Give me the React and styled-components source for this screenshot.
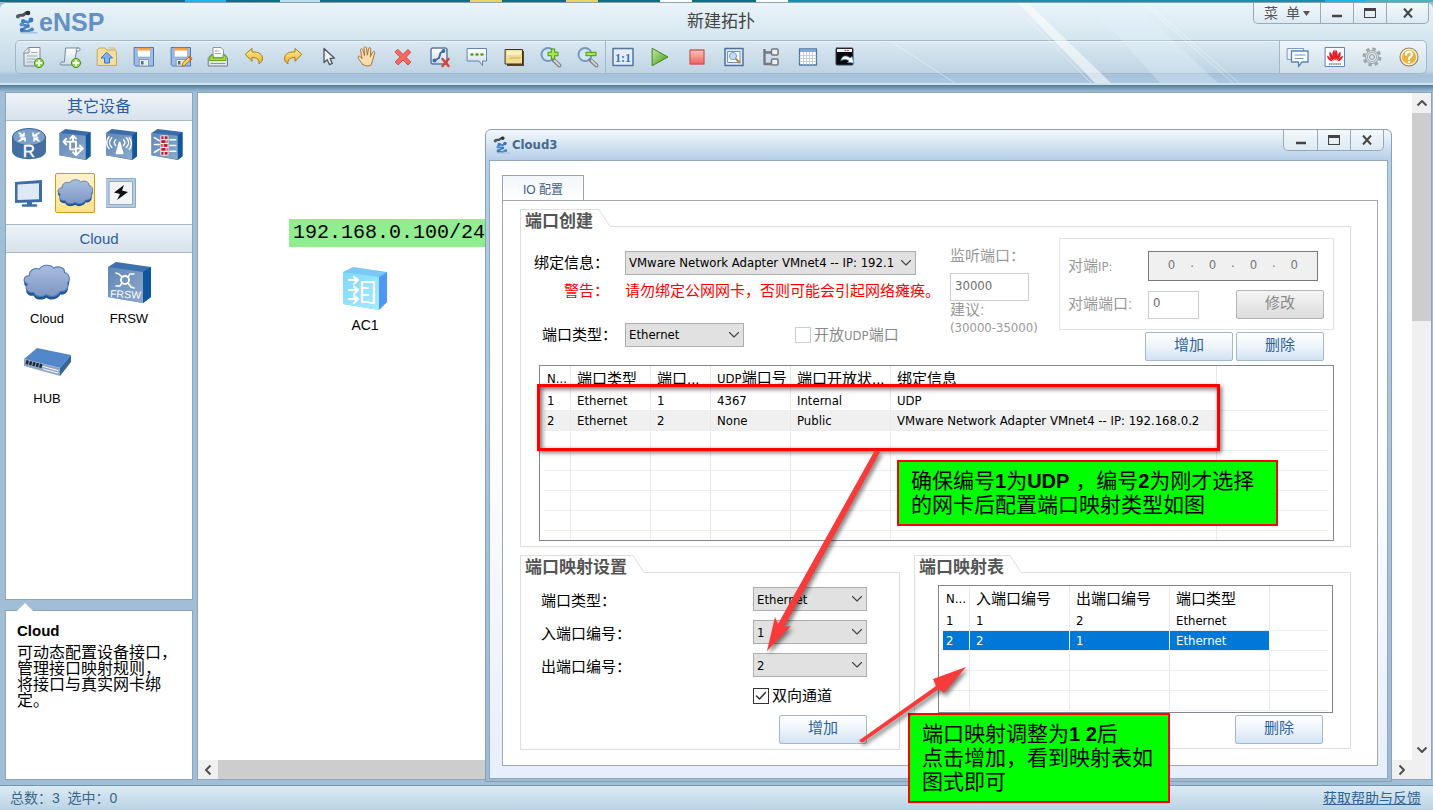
import React, { useState } from 'react';
import styled, { css, createGlobalStyle } from 'styled-components';

const cjk = `'Liberation Sans', 'Noto Sans CJK SC', sans-serif`;
const ui = `'DejaVu Sans Condensed', 'Noto Sans', 'Noto Sans CJK SC', sans-serif`;

const GlobalStyle = createGlobalStyle`
  * {
    box-sizing: border-box;
  }
  body {
    margin: 0;
    font-family: ${cjk};
    font-size: 15px;
    color: #000;
  }
  button,
  input,
  select {
    font: inherit;
    margin: 0;
  }
  svg {
    display: block;
  }
`;

/* ---------- frame ---------- */

const Frame = styled.div`
  min-height: 100vh;
  display: flex;
  flex-direction: column;
  background-color: #a1bed6;
  overflow: hidden;
`;
const Desktop = styled.div`
  height: 2px;
  background: linear-gradient(
    to right,
    #0b6f86 0 185px,
    #1ab6f0 185px 226px,
    #0b6f86 226px 280px,
    #b8e0f0 280px 320px,
    #0b6f86 320px 470px,
    #f0d060 470px 502px,
    #0b6f86 502px 566px,
    #f0d060 566px 598px,
    #0b6f86 598px 660px,
    #ffffff 660px 692px,
    #0b6f86 692px 756px,
    #ffffff 756px 788px,
    #1791a5 788px 1325px,
    #1ab6f0 1325px 1366px,
    #43b5bd 1366px
  );
`;
const Header = styled.header`
  position: relative;
  padding: 0 6px 9px 15px;
  border-top: 1px solid #8ba3b0;
  border-bottom: 2px solid #cfe3ef;
  border-radius: 6px 6px 0 0;
  background: linear-gradient(#eaf4f9, #d5e6ef 45%, #c2d7e6 85%, #a6c2db 90%, #adc8de);
`;
const Rays = styled.svg`
  position: absolute;
  right: 0;
  top: 0;
  width: 760px;
  height: 100%;
  pointer-events: none;
`;
const TitleRow = styled.div`
  position: relative;
  display: grid;
  grid-template-columns: 1fr auto 1fr;
  height: 37px;
`;
const Brand = styled.div`
  display: flex;
  align-items: center;
  font-size: 25px;
  line-height: 36px;
  font-weight: 700;
  color: #6590c5;
`;
const DocTitle = styled.div`
  font-size: 17px;
  line-height: 37px;
  color: #444;
`;
const Controls = styled.div`
  display: flex;
  justify-self: end;
  align-self: start;
  margin-right: ${(props) => (props.small ? '4px' : '-2px')};
  border: 1px solid #98a9b8;
  border-top: 0;
  border-radius: 0 0 5px 5px;
  background: linear-gradient(#f4f9fc, #dce9f2);
`;
const Control = styled.button`
  display: flex;
  justify-content: center;
  align-items: center;
  gap: 3px;
  width: ${(props) => props.w || 33}px;
  height: 20px;
  padding: 0;
  border: 0;
  background: transparent;
  font-size: 14px;
  line-height: 20px;
  white-space: pre;
  color: #555;
  & + & {
    border-left: 1px solid #98a9b8;
  }
`;

const Toolbar = styled.div`
  position: relative;
  display: flex;
  height: 34px;
  border: 1px solid #a0b8c9;
  border-radius: 5px;
  background: linear-gradient(#dbe9f2, #bed3e3);
  box-shadow: inset 0 1px 0 #eef6fa;
`;
const ToolGroup = styled.div`
  display: flex;
  align-items: center;
  gap: 4px;
  ${(props) =>
    props.divided &&
    css`
      margin-left: 1px;
      border-left: 1px solid #a0b8c9;
    `}
  ${(props) =>
    props.end &&
    css`
      margin-left: auto;
      padding: 0 1px;
      border-left: 1px solid #a0b8c9;
      border-radius: 0 5px 5px 0;
      background: linear-gradient(#eff6fa, #cfdfe9);
    `}
`;
const Tool = styled.button`
  display: flex;
  justify-content: center;
  align-items: center;
  width: 33px;
  height: 32px;
  padding: 0;
  border: 0;
  background: transparent;
`;

const Body = styled.div`
  flex: 1;
  display: flex;
  gap: 4px;
  padding: 7px 1px 5px 5px;
  background: linear-gradient(#4f7c98, #a1bed6 7px, #a1bed6);
`;

/* ---------- sidebar ---------- */

const Sidebar = styled.aside`
  display: flex;
  flex-direction: column;
  gap: 10px;
  width: 188px;
`;
const Palette = styled.section`
  height: 508px;
  border: 1px solid #8ba5bf;
  background-color: #fff;
`;
const PaletteTitle = styled.h2`
  margin: 0;
  height: 28px;
  border-bottom: 1px solid #a4b8ca;
  background: linear-gradient(#edf2f7, #d9e3ec);
  font-size: ${(props) => (props.latin ? '15px' : '16px')};
  line-height: 27px;
  font-weight: 400;
  text-align: center;
  color: #2b5ea3;
`;
const Categories = styled.div`
  display: grid;
  grid-template-columns: repeat(4, 46px);
  grid-auto-rows: 49px;
  height: 104px;
  border-bottom: 1px solid #a4b8ca;
`;
const Category = styled.button`
  display: flex;
  justify-content: center;
  align-items: center;
  width: 40px;
  height: 40px;
  margin: 3px;
  padding: 0;
  border: 1px solid transparent;
  border-radius: 2px;
  background: transparent;
  ${(props) =>
    props.selected &&
    css`
      border-color: #d19a1c;
      background: linear-gradient(#fdf1cf, #fee389);
    `}
`;
const Devices = styled.div`
  display: grid;
  grid-template-columns: repeat(2, 82px);
  grid-auto-rows: 80px;
`;
const Device = styled.div`
  display: flex;
  flex-direction: column;
  align-items: center;
  justify-content: space-between;
  padding: 6px 0 6px;
  font-size: 13px;
  line-height: 16px;
`;
const IconBox = styled.div`
  display: flex;
  align-items: center;
  height: 46px;
`;
const Info = styled.section`
  position: relative;
  flex: 1;
  padding: 11px;
  border: 1px solid #8ba5bf;
  background-color: #fff;
  font-size: 16px;
  line-height: 16px;
  white-space: pre-line;
  &::before {
    content: '';
    position: absolute;
    left: 11px;
    top: -8px;
    border: 8px solid transparent;
    border-top: 0;
    border-bottom-color: #fff;
  }
`;
const InfoTitle = styled.h3`
  margin: 0 0 5px;
  font-size: 15px;
  line-height: 18px;
`;

/* ---------- canvas ---------- */

const Workspace = styled.main`
  position: relative;
  flex: 1;
  display: grid;
  grid-template-columns: 1fr 19px;
  grid-template-rows: 1fr 19px;
  border: 1px solid #8ba5bf;
  background-color: #fff;
`;
const Sheet = styled.div`
  position: relative;
`;
const AddressTag = styled.div`
  position: absolute;
  left: 91px;
  top: 126px;
  padding: 0 4px;
  background-color: #90ee90;
  font-family: 'Liberation Mono', monospace;
  font-size: 20px;
  line-height: 28px;
`;
const Node = styled.div`
  position: absolute;
  left: 145px;
  top: 174px;
  display: flex;
  flex-direction: column;
  align-items: center;
  gap: 5px;
  font-size: 14px;
  line-height: 20px;
`;
const Scroll = styled.div`
  display: flex;
  flex-direction: ${(props) => (props.vertical ? 'column' : 'row')};
  background-color: #f0f0f0;
  svg {
    flex: none;
    width: 20px;
    height: 20px;
  }
`;
const Thumb = styled.div`
  flex: ${(props) => (props.vertical ? '0 0 208px' : '0 0 1000px')};
  background-color: #cdcdcd;
`;
const Space = styled.div`
  flex: 1;
`;

/* ---------- dialog ---------- */

const Dialog = styled.div`
  position: absolute;
  z-index: 1;
  left: 287px;
  right: 39px;
  top: 36px;
  padding: 0 3px 2px;
  border: 1px solid #8b9fb3;
  border-radius: 6px 6px 0 0;
  background: linear-gradient(#f3f8fc, #b3cee7 31px, #9bbad6);
`;
const DialogTitle = styled.div`
  display: flex;
  justify-content: space-between;
  height: 30px;
`;
const DialogName = styled.div`
  display: flex;
  align-items: center;
  gap: 1px;
  padding-left: 4px;
  font-family: ${ui};
  font-size: 13px;
  font-weight: 700;
  line-height: 26px;
  color: #44698f;
`;
const DialogBody = styled.div`
  padding: 14px 9px 12px 12px;
  border: 1px solid #93a8bc;
  background: linear-gradient(#fff 40%, #e7effc);
`;
const Tab = styled.button`
  display: block;
  width: 82px;
  height: 25px;
  padding: 0;
  border: 1px solid #9aa5af;
  border-bottom: 0;
  background: linear-gradient(#f2f6fb, #fff);
  font-size: 12px;
  color: #3f6083;
`;
const Panel = styled.div`
  display: flex;
  flex-direction: column;
  gap: 8px;
  padding: 8px 26px 15px 17px;
  border: 1px solid #a3a8ad;
  background-color: #fff;
`;
const Group = styled.section`
  min-width: 0;
`;
const GroupHead = styled.div`
  display: flex;
  height: 18px;
`;
const GroupName = styled.h3`
  margin: 0;
  padding: 0 5px 0 4px;
  border: 1px solid #dedede;
  border-width: 1px 0 0 1px;
  font-size: 17px;
  line-height: 24px;
  font-weight: 700;
  white-space: nowrap;
  color: #555;
`;
const GroupRule = styled.div`
  flex: 1;
  border-bottom: 1px solid #dedede;
`;
const GroupBody = styled.div`
  padding: ${(props) => props.pad};
  border: 1px solid #dedede;
  border-top: 0;
`;
const Split = styled.div`
  display: grid;
  grid-template-columns: 380fr 437fr;
  gap: 14px;
`;

const CreateForm = styled.div`
  display: flex;
  height: 127px;
`;
const BindColumn = styled.div`
  display: flex;
  flex-direction: column;
  width: 416px;
  padding-top: 13px;
`;
const FormRow = styled.div`
  display: flex;
  align-items: center;
  height: ${(props) => props.h || 24}px;
  margin-top: ${(props) => props.top || 0}px;
  color: ${(props) => (props.warn ? '#f00' : '#000')};
  line-height: 20px;
  white-space: nowrap;
`;
const Caption = styled.label`
  flex: none;
  width: 91px;
  padding-left: ${(props) => props.indent || 0}px;
`;
const Picker = styled.div`
  position: relative;
  width: ${(props) => (props.w ? `${props.w}px` : '100%')};
  height: 24px;
  select {
    width: 100%;
    height: 24px;
    padding: 0 20px 0 3px;
    border: 1px solid #adadad;
    border-radius: 0;
    background-color: #e1e1e1;
    appearance: none;
    font-family: ${ui};
    font-size: 13px;
    color: #000;
  }
  svg {
    position: absolute;
    right: 4px;
    top: 8px;
    pointer-events: none;
  }
`;
const Check = styled.label`
  display: inline-flex;
  align-items: center;
  gap: 3px;
  margin-left: ${(props) => props.left || 0}px;
  line-height: 20px;
  color: ${(props) => (props.off ? '#8a8a8a' : '#000')};
`;
const CheckBox = styled.span`
  display: inline-grid;
  input {
    grid-area: 1 / 1;
    width: 16px;
    height: 16px;
    border: 1px solid #333;
    background-color: #fff;
    appearance: none;
  }
  input:disabled {
    border-color: #ccc;
  }
  svg {
    grid-area: 1 / 1;
    pointer-events: none;
  }
`;
const Latin = styled.span`
  font-family: ${ui};
  font-size: 13px;
`;
const ListenColumn = styled.div`
  display: flex;
  flex-direction: column;
  align-items: flex-start;
  padding-top: 9px;
  line-height: 18px;
  color: #999;
  input {
    margin-top: 8px;
  }
`;
const TextBox = styled.input`
  width: ${(props) => props.w}px;
  height: 28px;
  padding: 0 4px 4px;
  border: 1px solid #ccc;
  background-color: #fff;
  font-family: ${ui};
  font-size: 13px;
  color: #6d6d6d;
`;
const PeerColumn = styled.div`
  width: 275px;
  margin-left: auto;
`;
const PeerBox = styled.div`
  height: 92px;
  padding: 12px 9px 0 8px;
  border: 1px solid #e2e2e2;
`;
const PeerRow = styled.div`
  display: flex;
  align-items: center;
  margin-bottom: 9px;
  color: #999;
  label {
    width: 80px;
    padding-bottom: 4px;
  }
`;
const IpBox = styled.div`
  display: flex;
  justify-content: space-evenly;
  width: 170px;
  height: 30px;
  padding: 0 4px;
  border: 1px solid #7a7a7a;
  background-color: #f0f0f0;
  font-family: ${ui};
  font-size: 13px;
  line-height: 22px;
  color: #777;
  input {
    width: 24px;
    height: 24px;
    padding: 0;
    border: 0;
    background: transparent;
    text-align: center;
    color: #777;
  }
`;
const Push = styled.button`
  width: 88px;
  height: 29px;
  padding: 0 0 3px;
  border: 1px solid #a3b8cc;
  border-radius: 2px;
  background: linear-gradient(#fff, #eef4fb 50%, #d2e2f2);
  font-size: 15px;
  line-height: 20px;
  color: #2b62a0;
  &:disabled {
    border-color: #b4b4b4;
    background: linear-gradient(#f5f5f5, #dcdcdc);
    color: #8a8a8a;
  }
`;
const Pushes = styled.div`
  display: flex;
  justify-content: flex-end;
  gap: 3px;
  margin: ${(props) => props.top || 2}px ${(props) => props.right || 0}px 0 0;
`;

const TableFrame = styled.div`
  height: ${(props) => props.h}px;
  margin-left: ${(props) => props.left || 0}px;
  padding: 0 4px;
  border: 1px solid #828790;
  overflow: hidden;
`;
const Table = styled.table`
  width: 100%;
  table-layout: fixed;
  border-collapse: separate;
  border-spacing: 0;
  th,
  td {
    height: 20px;
    padding: 0 0 0 6px;
    border-right: 1px solid #e9e9e9;
    border-bottom: 1px solid #eee;
    text-align: left;
    font-family: ${ui};
    font-size: 13px;
    line-height: 18px;
    font-weight: 400;
    white-space: nowrap;
    overflow: hidden;
  }
  th {
    height: 25px;
    border-bottom: 0;
    font-family: ${cjk};
    font-size: 15px;
    line-height: 22px;
  }
  th:first-child,
  td:first-child {
    padding-left: 3px;
  }
  th:last-child,
  td:last-child {
    border-right: 0;
  }
`;
const Row = styled.tr`
  ${(props) =>
    props.tone === 'stripe'
      ? css`
          td:not(:last-child) {
            background-color: #f0f0f0;
          }
        `
      : props.tone === 'selected'
      ? css`
          td:not(:last-child) {
            background-color: #0078d7;
            border-right-color: #fff;
            color: #fff;
          }
        `
      : ''}
`;

const MapForm = styled.div`
  display: grid;
  grid-template-columns: 1fr 114px;
  row-gap: 9px;
  align-items: center;
`;
const Second = styled.div`
  grid-column: 2;
`;

/* ---------- notes drawn over the dialog ---------- */

const Outline = styled.div`
  position: absolute;
  left: 51px;
  top: 254px;
  width: 683px;
  height: 67px;
  border: 3px solid #f00;
  box-shadow: 2px 2px 4px rgba(0, 0, 0, 0.5), inset 2px 2px 5px rgba(0, 0, 0, 0.6);
  pointer-events: none;
`;
const Arrows = styled.svg`
  position: absolute;
  left: 0;
  top: 0;
  width: 100%;
  height: 100%;
  overflow: visible;
  pointer-events: none;
  filter: drop-shadow(2px 3px 2px rgba(0, 0, 0, 0.5));
`;
const Note = styled.div`
  position: absolute;
  left: ${(props) => props.x}px;
  top: ${(props) => props.y}px;
  width: ${(props) => props.w}px;
  padding: 7px 12px;
  border: 2px solid #f00;
  background-color: #0f0;
  font-size: 21px;
  line-height: 24px;
  font-weight: 400;
  white-space: pre;
  b {
    font-size: 20px;
  }
`;

const StatusBar = styled.footer`
  display: flex;
  justify-content: space-between;
  height: 25px;
  padding: 0 12px 0 10px;
  border-top: 1px solid #6f94ae;
  background: linear-gradient(#dcebf4, #b9d3e4);
  font-size: 14px;
  line-height: 25px;
  white-space: pre;
  color: #3c678c;
  a {
    color: #2f6492;
  }
`;

/* ---------- icons ---------- */

const Svg = ({ size = 24, w, h, box, children }) => (
  <svg
    width={w || size}
    height={h || size}
    viewBox={box || '0 0 24 24'}
    fill="none"
    strokeLinejoin="round"
    strokeLinecap="round"
  >
    {children}
  </svg>
);

const Gradients = () => (
  <svg width="0" height="0" style={{ position: 'absolute' }}>
    <defs>
      <linearGradient id="steel" x1="0" y1="0" x2="1" y2="1">
        <stop offset="0" stopColor="#5f87b8" />
        <stop offset="1" stopColor="#8fa9cc" />
      </linearGradient>
      <linearGradient id="cloud" x1="0" y1="0" x2="0" y2="1">
        <stop offset="0" stopColor="#a9bedf" />
        <stop offset="1" stopColor="#7d96c3" />
      </linearGradient>
      <linearGradient id="gold" x1="0" y1="0" x2="0" y2="1">
        <stop offset="0" stopColor="#fff0a0" />
        <stop offset="1" stopColor="#e3ad1c" />
      </linearGradient>
      <linearGradient id="green" x1="0" y1="0" x2="1" y2="1">
        <stop offset="0" stopColor="#c5e8a0" />
        <stop offset="1" stopColor="#3f9a16" />
      </linearGradient>
      <linearGradient id="red" x1="0" y1="0" x2="0" y2="1">
        <stop offset="0" stopColor="#f8c4c0" />
        <stop offset="1" stopColor="#f0615c" />
      </linearGradient>
      <linearGradient id="ice" x1="0" y1="0" x2="1" y2="1">
        <stop offset="0" stopColor="#7fd8fa" />
        <stop offset="1" stopColor="#a8ecff" />
      </linearGradient>
      <linearGradient id="paper" x1="0" y1="0" x2="0" y2="1">
        <stop offset="0" stopColor="#ffffff" />
        <stop offset="1" stopColor="#cfdbe6" />
      </linearGradient>
    </defs>
  </svg>
);

const LogoMark = ({ size }) => (
  <Svg size={size}>
    <path d="M2.500 6.500C5 4 6.500 6.500 9 4.500S11.500 2 13.500 2.500" stroke="#4c5157" strokeWidth="3" />
    <circle cx="3" cy="6.500" r="2" fill="#5a6067" />
    <circle cx="13" cy="3" r="2.300" fill="#2d3136" />
    <path d="m16 10-3 2.500-4-1.500-2.500 3.500 6 1.500-5.500 4 5 1.500 5-2" stroke="#4d84c6" strokeWidth="2.600" />
    <circle cx="16" cy="10" r="2.400" fill="#3a74bb" />
    <circle cx="8" cy="11" r="2" fill="#3f7cc4" />
    <circle cx="6.500" cy="14.500" r="2" fill="#5c8fcd" />
    <circle cx="13" cy="16" r="1.900" fill="#3f7cc4" />
    <circle cx="7" cy="20" r="2.200" fill="#3a74bb" />
    <circle cx="17" cy="19.500" r="1.900" fill="#4a82c6" />
    <path d="M6 22.800h16" stroke="#a8c4dd" strokeWidth="1.500" />
  </Svg>
);

const Plus = () => (
  <>
    <circle cx="18" cy="18" r="4.600" fill="#8fd44a" stroke="#3f9416" />
    <path d="M18 15.400v5.200M15.400 18h5.200" stroke="#fff" strokeWidth="1.800" />
  </>
);

const Floppy = () => (
  <>
    <path d="M2.500 2.500h19v18.500h-18l-1-1z" fill="#9fbce6" stroke="#4a77b5" />
    <path d="M5.500 3h13v9h-13z" fill="#fff" stroke="#7f9cc4" strokeWidth=".6" />
    <path d="M5.500 3h13v2.500h-13z" fill="#f6a04a" />
    <path d="M7.500 14.500h9V21h-9z" fill="#e5ebf1" stroke="#8b9caf" />
    <path d="M9 16h2.500v3.500H9z" fill="#5a6b7d" />
  </>
);

const toolIcons = {
  新建拓扑: (
    <>
      <path d="M8 2.500h11v18.500H3V8z" fill="url(#paper)" stroke="#7d8996" />
      <path d="M8 2.500V8H3" fill="#e8eef3" stroke="#7d8996" />
      <path d="M10.500 7.500H16M6 11h10M6 14h8M6 17h6" stroke="#a1abb5" />
      <Plus />
    </>
  ),
  新建试卷: (
    <>
      <path d="M8 3h13c1.500 0 1.500 3-.5 3h-2L16 20H3c-1.500 0-1-3 1-3h2z" fill="url(#paper)" stroke="#6f8ba3" />
      <path d="M18.500 6c-1-1 0-3 1.500-3" stroke="#6f8ba3" />
      <Plus />
    </>
  ),
  打开: (
    <>
      <path d="M2.500 4.500 4 3h6l1.500 2H20l1.500 1.500v14h-19z" fill="#f3dd9f" stroke="#c9a95c" />
      <path d="M14 3h6v2" stroke="#e0bc5f" />
      <path d="m12 7.500 5.500 5.500H14.500v5h-5v-5H6.500z" fill="#7fb0f0" stroke="#3b76c4" />
    </>
  ),
  保存: <Floppy />,
  另存为: (
    <>
      <Floppy />
      <path d="m13 21 1-3.500 7-6.500 2 2.500-7 6.500z" fill="#ffd257" stroke="#a87417" />
      <path d="m20 12 2 2.500" stroke="#e2523b" strokeWidth="1.500" />
    </>
  ),
  打印: (
    <>
      <path d="M2.500 13 5 9.500h14l2.500 3.500v8h-19z" fill="#dfe5ea" stroke="#6f7d8b" />
      <path d="M7 12V2.500h8L17.500 5v7z" fill="#fff" stroke="#8a96a1" />
      <path d="M9 6h4M9 8.500h6" stroke="#9aa5af" />
      <path d="M4 12.500 6 9.500h1V13h10V9.500h1l2 3v3H4z" fill="#a8dc3c" stroke="#6aa51d" />
      <path d="M5 18.500h14" stroke="#8d99a5" />
    </>
  ),
  撤销: (
    <path
      d="M2.500 9 9 3.500V7c7-.500 10.500 2.500 10.500 6.500 0 2.500-1.500 4-3.500 5.500.500-4-1.500-6.500-7-6.500V16z"
      fill="url(#gold)"
      stroke="#a97b14"
    />
  ),
  重做: (
    <path
      d="M21.500 9 15 3.500V7C8 6.500 4.500 9.500 4.500 13.500c0 2.500 1.500 4 3.500 5.500-.500-4 1.500-6.500 7-6.500V16z"
      fill="url(#gold)"
      stroke="#a97b14"
    />
  ),
  选择: <path d="M7 3.500v14l3.200-2.800 2.300 5 2.800-1.300-2.300-4.900 4.500-.3z" fill="#f0f3f6" stroke="#4d555d" strokeWidth="1.300" />,
  移动: (
    <path
      d="M8 20c-2-3-5-5.500-5-8 1.500-1.500 3 .5 4 2L5.500 5.500c0-2 2-2 2.500 0L9.500 11 9 3.500c0-2 2.500-2 2.500 0l.8 7 1.200-6.500c.5-1.800 2.500-1.200 2.300.5L15.300 12l2.400-4.500c1-1.500 2.500-.5 2 1L17.500 16l-1.500 4.500c-2.500 1-6 1-8-.5z"
      fill="#fbdcae"
      stroke="#a7773c"
      transform="translate(1 -.3)"
    />
  ),
  删除: (
    <path
      d="m7 4.500 5 5 5-5 2.800 2.800-4.800 5 4.800 4.700-2.800 3-5-5-4.800 5-3-3 4.800-4.800L4.200 7.300z"
      fill="#f26a60"
      stroke="#d8473f"
    />
  ),
  删除连线: (
    <>
      <rect x="3" y="3" width="16" height="16" rx="2" fill="url(#paper)" stroke="#5b7da3" strokeWidth="1.500" />
      <path d="M16 5.500 12.500 8l-1.500 5-4.500 2.500" stroke="#3a6ea5" strokeWidth="2" />
      <circle cx="15.500" cy="6" r="2" fill="#3a6ea5" />
      <circle cx="6.500" cy="15.500" r="2" fill="#3a6ea5" />
      <path d="m14.500 14 6 7m0-7-6 7" stroke="#d5443a" strokeWidth="2.500" />
    </>
  ),
  文本: (
    <>
      <path d="M2.500 3.500h19V16h-4v4.500L14 16H2.500z" fill="url(#paper)" stroke="#6487ae" />
      <path d="M6.500 9.500h1M11.500 9.500h1M16.500 9.500h1" stroke="#55a520" strokeWidth="2.500" />
    </>
  ),
  调色板: (
    <>
      <path d="M5 6h17v15H5z" fill="#5c4718" />
      <path d="M3.500 4.500h17v14.500h-17z" fill="#f1dc94" stroke="#3f3520" />
      <path d="M5 6h14v4H5z" fill="#fbf0bf" />
      <path d="M8 13h10" stroke="#dcc06a" strokeWidth="1.500" />
    </>
  ),
  放大: (
    <>
      <circle cx="9" cy="9.500" r="6.500" fill="#d4e7fa" stroke="#7597be" strokeWidth="2" />
      <path d="m14.500 15 6 5.500" stroke="#7d8288" strokeWidth="4" />
      <path d="m15.500 15.500 5 4.800" stroke="#d5d9dc" strokeWidth="1.800" />
      <path d="M14 3.500v11M8.500 9h11" stroke="#4f9c12" strokeWidth="4.400" strokeLinecap="butt" />
      <path d="M14 4.500v9M9.500 9h9" stroke="#a6e84e" strokeWidth="2.400" strokeLinecap="butt" />
    </>
  ),
  缩小: (
    <>
      <circle cx="9" cy="9.500" r="6.500" fill="#d4e7fa" stroke="#7597be" strokeWidth="2" />
      <path d="m14.500 15 6 5.500" stroke="#7d8288" strokeWidth="4" />
      <path d="m15.500 15.500 5 4.800" stroke="#d5d9dc" strokeWidth="1.800" />
      <path d="M9.500 9h11" stroke="#4f9c12" strokeWidth="4.400" strokeLinecap="butt" />
      <path d="M10.500 9h9" stroke="#a6e84e" strokeWidth="2.400" strokeLinecap="butt" />
    </>
  ),
};

const viewIcons = {
  原始比例: (
    <>
      <path d="M2 3.500h20v17H2z" fill="#e4edf6" stroke="#53779f" strokeWidth="1.500" />
      <text x="12" y="16.500" fontSize="12" fontWeight="700" fontFamily="Liberation Serif, serif" textAnchor="middle" fill="#3a72ba">
        1:1
      </text>
    </>
  ),
  启动设备: <path d="M4.500 3.500 20 12 4.500 20.500z" fill="url(#green)" stroke="#3d8519" />,
  停止设备: <path d="M5 5h14v14H5z" fill="url(#red)" stroke="#cf5b5b" strokeWidth="1.300" />,
  数据抓包: (
    <>
      <path d="M3 3.500h18v17H3z" fill="#dce8f2" stroke="#4f7197" strokeWidth="1.500" />
      <path d="M6 6.500h12v11H6z" fill="#f8fbfd" stroke="#7391b1" />
      <circle cx="11" cy="11" r="3.600" fill="#c2defa" stroke="#7f9fc2" />
      <path d="m14 14 3.500 3.500" stroke="#b8863a" strokeWidth="2" />
    </>
  ),
  显示接口: (
    <>
      <path d="M5.500 4v15H12M5.500 7.500H12" stroke="#75797e" strokeWidth="2.400" strokeLinecap="butt" />
      <rect x="12.500" y="4" width="6.500" height="6" rx="1" fill="#eaf0f4" stroke="#75797e" strokeWidth="1.500" />
      <rect x="12.500" y="14" width="6.500" height="6" rx="1" fill="#eaf0f4" stroke="#75797e" strokeWidth="1.500" />
    </>
  ),
  显示网格: (
    <>
      <path d="M3.500 4h17v16h-17z" fill="#fff" stroke="#4c76a8" strokeWidth="1.300" />
      <path d="M4 4.500h16V7H4z" fill="#7fa8d8" />
      <path d="M4 10.500h16M4 13.500h16M4 16.500h16M7.500 7v12.500M10.500 7v12.500M13.500 7v12.500M16.500 7v12.500" stroke="#b7c7d8" strokeWidth=".8" />
    </>
  ),
  命令行: (
    <>
      <rect x="3" y="3" width="17" height="17" rx="1" fill="#0a0a0a" stroke="#33404e" />
      <path d="M4 4h15v3H4z" fill="#f4f6f8" />
      <path d="M12 5.500h5" stroke="#d33" strokeDasharray="1 1.500" />
      <path d="M8 15.500c0-5 6-6 9-2.500l2-1.500 2 6.500-6.500-.5 1.500-1.500c-2-2-5-2-8-.5z" fill="#fff" stroke="#4b82c4" strokeWidth=".7" />
    </>
  ),
};

const endIcons = {
  论坛: (
    <>
      <path d="M1.500 3.500h16v11h-16z" fill="#edf3f8" stroke="#7c9dc1" />
      <path d="M5.500 6h16.500v11h-6l-3.500 4.500V17h-7z" fill="#fafcfe" stroke="#5b84b1" strokeWidth="1.300" />
      <path d="M9 10h10M9 13.500h8" stroke="#6f95bf" />
    </>
  ),
  官网: (
    <>
      <path d="M2.500 2.500h19v19h-19z" fill="#fff" stroke="#5d85b8" />
      <path
        d="M11.500 15.500C9 12 8.500 7 11.300 4.500c1 3 1 8 .2 11zM12.500 15.500C15 12 15.500 7 12.700 4.500c-1 3-1 8-.2 11zM10.500 16C7 13.500 5.500 10 6.800 6.500c2.500 2.500 3.600 6 3.700 9.500zM13.500 16c3.500-2.500 5-6 3.700-9.500-2.500 2.500-3.600 6-3.700 9.500zM9.500 16.500c-3.500-.8-5.500-3-5.500-6 2.500 1 4.500 3.500 5.500 6zM14.500 16.500c3.500-.8 5.500-3 5.500-6-2.500 1-4.500 3.500-5.500 6z"
        fill="#e21b26"
      />
      <path d="M6 19h12" stroke="#777" strokeWidth="1.500" strokeDasharray="1.500 .6" strokeLinecap="butt" />
    </>
  ),
  设置: (
    <>
      <circle cx="12" cy="12" r="8" stroke="#9da7ad" strokeWidth="3" strokeDasharray="3.500 2.783" strokeLinecap="butt" />
      <circle cx="12" cy="12" r="5.500" fill="#e7ecef" stroke="#97a2a9" strokeWidth="3" />
      <circle cx="12" cy="12" r="5.500" stroke="#cfd6da" strokeWidth="1.400" />
      <circle cx="12" cy="12" r="2.500" fill="#d8e4ec" stroke="#8d989f" />
    </>
  ),
  帮助: (
    <>
      <circle cx="12" cy="12" r="9" fill="#e9b23c" stroke="#8e8676" strokeWidth="1.200" />
      <circle cx="12" cy="12" r="7.700" stroke="#fff3d0" strokeWidth="1.300" />
      <path d="M9 9.800c0-4 6-3.800 6-.3 0 2-3 2.200-3 4.500" stroke="#fff" strokeWidth="2.200" />
      <circle cx="12" cy="17" r="1.300" fill="#fff" />
    </>
  ),
};

const cloudPath =
  'M8 12C7 7 13 4 17 6c3-5 11-5 14-1 4-3 11 0 10 4 5 1 6 7 3 10 2 5-3 9-7 8-2 5-10 6-13 3-4 3-11 2-12-2-6 1-9-4-6-8C1 18 2 12 8 12z';
const CloudIcon = ({ w, h }) => (
  <Svg w={w} h={h} box="2 1 45 37">
    <path d={cloudPath} fill="#1f5796" transform="translate(0 4)" />
    <path d={cloudPath} fill="url(#cloud)" stroke="#4f79ae" transform="translate(0 1)" />
  </Svg>
);
const Cube = ({ w, h, children }) => (
  <Svg w={w} h={h} box="0 0 32 32">
    <path d="m0 4 6-4 26 3v25l-5 4L0 27z" fill="#3a6da9" />
    <path d="m27 7 5-4v25l-5 4z" fill="#0f569c" />
    <path d="M0 4h.5L27 7v24.500L0 27z" fill="url(#steel)" />
    <g stroke="#fff" strokeWidth="2">
      {children}
    </g>
  </Svg>
);

const categories = [
  {
    name: '路由器',
    icon: (
      <Svg w={34} h={32} box="0 0 34 32">
        <path d="M0 9v14c0 11 34 11 34 0V9z" fill="#44709f" />
        <ellipse cx="17" cy="9" rx="16.500" ry="8.500" fill="#7d9fc6" stroke="#31639c" />
        <path d="m7 5 5 3m0-3v3H8m19-3-6 3m0-3v3h4M7 13l6-3m-4 0h4v3m14 0-5-3m4 0h-4v3" stroke="#fff" strokeWidth="1.500" />
        <text x="17" y="29" fontSize="17" fontFamily="Liberation Sans, sans-serif" textAnchor="middle" fill="#fff" stroke="#fff" strokeWidth=".3">
          R
        </text>
      </Svg>
    ),
  },
  {
    name: '交换机',
    icon: (
      <Cube w={32} h={31}>
        <path d="M11 13h6v8h-6zM14 13V7m-3 3 3-3 3 3M17 21v5m-3-2 3 3 3-3M11 13H4m3-3-3 3 3 3M17 20h7m-3-3 3 3-3 3" />
      </Cube>
    ),
  },
  {
    name: '无线局域网',
    icon: (
      <Cube w={31} h={31}>
        <path d="M14 14 11 25h6z" fill="#fff" />
        <path d="M10 11c-2 2-2 4 0 6M6 9c-3 3-3 7 0 10M3 8c-3 4-3 9 0 12M18 11c2 2 2 4 0 6M21 9c3 3 3 7 0 10M24 9c3 4 3 8 0 12" strokeWidth="1.500" />
      </Cube>
    ),
  },
  {
    name: '防火墙',
    icon: (
      <Cube w={32} h={31}>
        <path d="M10 7h7v20h-7z" fill="#b32430" strokeWidth=".8" />
        <path d="M10 11h7M10 15h7M10 19h7M10 23h7M13 7v4M15 11v4M12 15v4M15 19v4M13 23v4" strokeWidth="1" />
        <path d="m3 9 5 3M3 16h5M3 24l5-3M19 11h6M19 17h6M19 23h6" strokeWidth="1.600" />
      </Cube>
    ),
  },
  {
    name: '终端',
    icon: (
      <Svg w={30} h={29} box="0 0 30 29">
        <path d="m1 3 27-2v22L1 24z" fill="#3d6da3" />
        <path d="m3.500 5.500 21.500-1.300v16L3.500 21z" fill="#dfe9f6" />
        <path d="M13 23h5v3h-5z" fill="#3d6da3" />
        <path d="M9 26.500h13" stroke="#3d6da3" strokeWidth="2.500" />
      </Svg>
    ),
  },
  { name: '其它设备', icon: <CloudIcon w={37} h={30} /> },
  {
    name: '设备连线',
    icon: (
      <Svg w={30} h={30} box="0 0 30 30">
        <path d="M.5.5h29v29H.5z" fill="#b4cbe4" stroke="#8dabcc" />
        <path d="M3.500 3.500h23v23h-23z" fill="#f2f4f6" stroke="#9aa9b9" />
        <path d="m18 7-10 7.500 6 1.500-3 6 11-8-6-1.500z" fill="#111" />
      </Svg>
    ),
  },
];

const devices = [
  { name: 'Cloud', icon: <CloudIcon w={48} h={39} /> },
  {
    name: 'FRSW',
    icon: (
      <Svg w={43} h={41} box="0 0 43 41">
        <path d="m0 5 8-5 35 5v30l-8 6L0 35z" fill="#3d70ac" />
        <path d="m35 10 8-5v30l-8 6z" fill="#0f569c" />
        <path d="m0 5 35 5v31L0 35z" fill="url(#steel)" />
        <circle cx="17" cy="18" r="4" stroke="#fff" strokeWidth="1.800" />
        <path d="m8 11 3 1 3 3M8 24h4l2-3M26 12h-4l-2 3M26 26l-3-1-3-4" stroke="#fff" strokeWidth="1.600" />
        <text x="17.500" y="36" fontSize="10.500" fontFamily="Liberation Sans, sans-serif" textAnchor="middle" fill="#fff" transform="rotate(3 17 34)">
          FRSW
        </text>
      </Svg>
    ),
  },
  {
    name: 'HUB',
    icon: (
      <Svg w={47} h={28} box="0 0 47 28">
        <path d="m13 0 34 7-11 13L0 11z" fill="#5288c9" />
        <path d="m0 11 36 9v8L0 18z" fill="#8fa5c2" />
        <path d="M36 20 47 7v7L36 28z" fill="#35649c" />
        <path d="m2 14 16 4.200" stroke="#1f2a38" strokeWidth="4" strokeDasharray="2.500 1" strokeLinecap="butt" />
        <path d="m19 18.500 15 4M19 21l15 4" stroke="#fff" strokeWidth="1" />
      </Svg>
    ),
  },
];

const AcIcon = () => (
  <Svg w={44} h={43} box="0 0 44 43">
    <path d="m0 5 10-5 34 5v30l-8 8L0 37z" fill="#79c8f5" />
    <path d="m36 10 8-5v30l-8 8z" fill="#5096f5" />
    <path d="m0 5 36 5v33L0 37z" fill="url(#ice)" />
    <path
      d="M6 13h8m-3-3 4 3-4 4M6 23h8m-3-3 4 3-4 4M6 32h8m-3-3 4 3-4 4M19 15v20M19 15h6M19 21h6M19 28h6M19 35h6M25 15h6v21h-4"
      stroke="#fff"
      strokeWidth="2.200"
    />
  </Svg>
);

const Chevron = () => (
  <Svg w={12} h={8} box="0 0 12 8">
    <path d="m1.500 1.500 4.500 4.500 4.500-4.500" stroke="#444" strokeWidth="1.100" />
  </Svg>
);
const ScrollArrow = ({ turn }) => (
  <Svg size={20} box="0 0 20 20">
    <path d="m5.500 12.500 4.500-4.500 4.500 4.500" stroke="#505050" strokeWidth="2" strokeLinecap="butt" transform={`rotate(${turn} 10 10)`} />
  </Svg>
);

/* ---------- parts ---------- */

const WindowButtons = ({ close = 33 }) => (
  <>
    <Control aria-label="最小化">
      <Svg w={12} h={10} box="0 0 12 10">
        <path d="M1 8h10" stroke="#444" strokeWidth="2.500" strokeLinecap="butt" />
      </Svg>
    </Control>
    <Control aria-label="最大化">
      <Svg w={12} h={10} box="0 0 12 10">
        <path d="M.5.5h11v9H.5zM.5 2h11" stroke="#444" strokeWidth="1.100" />
        <path d="M0 0h12v3H0z" fill="#444" />
      </Svg>
    </Control>
    <Control w={close} aria-label="关闭">
      <Svg w={12} h={10} box="0 0 12 10">
        <path d="m2 .5 8 9m0-9-8 9" stroke="#444" strokeWidth="2" strokeLinecap="butt" />
      </Svg>
    </Control>
  </>
);

const Tools = ({ icons }) =>
  Object.keys(icons).map((name) => (
    <Tool key={name} aria-label={name}>
      <Svg>{icons[name]}</Svg>
    </Tool>
  ));

const Select = ({ id, value, w }) => (
  <Picker w={w}>
    <select id={id} defaultValue={value}>
      <option>{value}</option>
    </select>
    <Chevron />
  </Picker>
);

const CheckField = ({ children, left, off, checked, onChange }) => (
  <Check left={left} off={off}>
    <CheckBox>
      <input type="checkbox" disabled={off} checked={checked} onChange={onChange} />
      {checked && (
        <Svg size={16} box="0 0 16 16">
          <path d="m3.500 8 3 3 6-6.500" stroke="#333" strokeWidth="1.500" />
        </Svg>
      )}
    </CheckBox>
    <span>{children}</span>
  </Check>
);

const Section = ({ title, pad, children }) => (
  <Group>
    <GroupHead>
      <GroupName>{title}</GroupName>
      <Svg w={13} h={18} box="0 0 13 18">
        <path d="M0 .5h1l11 17h1" stroke="#dedede" />
      </Svg>
      <GroupRule />
    </GroupHead>
    <GroupBody pad={pad}>{children}</GroupBody>
  </Group>
);

const Grid = ({ widths, heads, rows, blank, tones }) => (
  <Table>
    <colgroup>
      {widths.map((width, i) => (
        <col key={i} width={width} />
      ))}
      <col />
    </colgroup>
    <thead>
      <tr>
        {heads.map((head, i) => (
          <th key={i}>{head}</th>
        ))}
        <th />
      </tr>
    </thead>
    <tbody>
      {rows.map((row, i) => (
        <Row key={i} tone={tones[i]}>
          {row.map((cell, j) => (
            <td key={j}>{cell}</td>
          ))}
          <td />
        </Row>
      ))}
      {Array.from({ length: blank }, (_, i) => (
        <Row key={`blank${i}`}>
          {heads.map((_, j) => (
            <td key={j} />
          ))}
          <td />
        </Row>
      ))}
    </tbody>
  </Table>
);

const ports = [
  ['1', 'Ethernet', '1', '4367', 'Internal', 'UDP'],
  ['2', 'Ethernet', '2', 'None', 'Public', 'VMware Network Adapter VMnet4 -- IP: 192.168.0.2'],
];
const mappings = [
  ['1', '1', '2', 'Ethernet'],
  ['2', '2', '1', 'Ethernet'],
];

const CloudDialog = () => {
  const [twoWay, setTwoWay] = useState(true);

  return (
    <Dialog role="dialog" aria-label="Cloud3">
      <DialogTitle>
        <DialogName>
          <LogoMark size={18} />
          Cloud3
        </DialogName>
        <Controls small>
          <WindowButtons />
        </Controls>
      </DialogTitle>
      <DialogBody>
        <Tab>IO 配置</Tab>
        <Panel>
          <Section title="端口创建" pad="11px 16px 5px 13px">
            <CreateForm>
              <BindColumn>
                <FormRow>
                  <Caption htmlFor="bind">绑定信息：</Caption>
                  <Select id="bind" w={291} value="VMware Network Adapter VMnet4 -- IP: 192.1" />
                </FormRow>
                <FormRow warn h={32}>
                  <Caption as="span" indent={30}>
                    警告：
                  </Caption>
                  <span>请勿绑定公网网卡，否则可能会引起网络瘫痪。</span>
                </FormRow>
                <FormRow top={16}>
                  <Caption htmlFor="type" indent={8}>
                    端口类型：
                  </Caption>
                  <Select id="type" w={119} value="Ethernet" />
                  <CheckField left={51} off checked={false}>
                    开放<Latin>UDP</Latin>端口
                  </CheckField>
                </FormRow>
              </BindColumn>
              <ListenColumn>
                <label htmlFor="listen">监听端口：</label>
                <TextBox id="listen" w={79} defaultValue="30000" />
                <span>建议:</span>
                <Latin>(30000-35000)</Latin>
              </ListenColumn>
              <PeerColumn>
                <PeerBox>
                  <PeerRow>
                    <label htmlFor="ip0">
                      对端<Latin>IP:</Latin>
                    </label>
                    <IpBox>
                      {[0, 1, 2, 3].map((n) => (
                        <React.Fragment key={n}>
                          {n > 0 && <span>.</span>}
                          <input id={`ip${n}`} aria-label={`IP ${n + 1}`} defaultValue="0" />
                        </React.Fragment>
                      ))}
                    </IpBox>
                  </PeerRow>
                  <PeerRow>
                    <label htmlFor="peer">对端端口:</label>
                    <TextBox id="peer" w={51} defaultValue="0" />
                    <Space />
                    <Push disabled>修改</Push>
                  </PeerRow>
                </PeerBox>
                <Pushes right={10}>
                  <Push>增加</Push>
                  <Push>删除</Push>
                </Pushes>
              </PeerColumn>
            </CreateForm>
            <TableFrame h={176} left={5}>
              <Grid
                widths={[27, 80, 60, 80, 100, 326]}
                heads={[
                  <Latin>N...</Latin>,
                  '端口类型',
                  '端口...',
                  <>
                    <Latin>UDP</Latin>端口号
                  </>,
                  '端口开放状...',
                  '绑定信息',
                ]}
                rows={ports}
                tones={['', 'stripe']}
                blank={6}
              />
            </TableFrame>
          </Section>
          <Split>
            <Section title="端口映射设置" pad="14px 32px 5px 20px">
              <MapForm>
                <label htmlFor="mapType">端口类型：</label>
                <Select id="mapType" value="Ethernet" />
                <label htmlFor="mapIn">入端口编号：</label>
                <Select id="mapIn" value="1" />
                <label htmlFor="mapOut">出端口编号：</label>
                <Select id="mapOut" value="2" />
                <Second>
                  <CheckField checked={twoWay} onChange={() => setTwoWay(!twoWay)}>
                    双向通道
                  </CheckField>
                </Second>
              </MapForm>
              <Pushes top={8}>
                <Push>增加</Push>
              </Pushes>
            </Section>
            <Section title="端口映射表" pad="12px 17px 4px 23px">
              <TableFrame h={128}>
                <Grid
                  widths={[27, 100, 100, 100]}
                  heads={[<Latin>N...</Latin>, '入端口编号', '出端口编号', '端口类型']}
                  rows={mappings}
                  tones={['', 'selected']}
                  blank={3}
                />
              </TableFrame>
              <Pushes right={10}>
                <Push>删除</Push>
              </Pushes>
            </Section>
          </Split>
        </Panel>
      </DialogBody>
      <Outline />
      <Note x={411} y={330} w={381}>
        确保编号<b>1</b>为<b>UDP</b> ，编号<b>2</b>为刚才选择{'\n'}的网卡后配置端口映射类型如图
      </Note>
      <Note x={422} y={583} w={262}>
        端口映射调整为<b>1 2</b>后{'\n'}点击增加，看到映射表如{'\n'}图式即可
      </Note>
      <Arrows>
        <path d="M389 320 394 322 298 497 305 496 281 521 289 487 292 494z" fill="#f93a3a" />
        <path d="m375 609 75-53-3-7 33-12-22 26-5-4-76 53c-3 1-5-2-2-3z" fill="#f93a3a" />
      </Arrows>
    </Dialog>
  );
};

const App = () => {
  return (
    <Frame>
      <GlobalStyle />
      <Gradients />
      <Desktop />
      <Header>
        <TitleRow>
          <Brand>
            <LogoMark size={24} />
            <span>eNSP</span>
          </Brand>
          <DocTitle>新建拓扑</DocTitle>
          <Controls>
            <Control w={66}>
              菜  单
              <Svg w={7} h={5} box="0 0 7 5">
                <path d="M0 0h7L3.500 5z" fill="#555" />
              </Svg>
            </Control>
            <WindowButtons close={42} />
          </Controls>
        </TitleRow>
        <Toolbar>
          <ToolGroup>
            <Tools icons={toolIcons} />
          </ToolGroup>
          <ToolGroup divided>
            <Tools icons={viewIcons} />
          </ToolGroup>
          <ToolGroup end>
            <Tools icons={endIcons} />
          </ToolGroup>
        </Toolbar>
        <Rays viewBox="0 0 760 84" preserveAspectRatio="none">
          <path d="M345 0h10l83 84h-16z" fill="#fff" opacity=".55" />
          <path d="m352 14 66 70" stroke="#fff" strokeWidth="1" opacity=".4" />
          <path d="M415 0h45l85 84h-58z" fill="#e4f4fb" opacity=".3" />
          <path d="m470 0 90 84M474 0l92 84M220 42l62 42" stroke="#fff" strokeWidth="1" opacity=".4" />
        </Rays>
      </Header>
      <Body>
        <Sidebar>
          <Palette>
            <PaletteTitle>其它设备</PaletteTitle>
            <Categories>
              {categories.map((x, index) => (
                <Category key={x.name} aria-label={x.name} selected={index === 5}>
                  {x.icon}
                </Category>
              ))}
            </Categories>
            <PaletteTitle latin>Cloud</PaletteTitle>
            <Devices>
              {devices.map((x) => (
                <Device key={x.name}>
                  <IconBox>{x.icon}</IconBox>
                  {x.name}
                </Device>
              ))}
            </Devices>
          </Palette>
          <Info>
            <InfoTitle>Cloud</InfoTitle>
            {'可动态配置设备接口，\n管理接口映射规则，\n将接口与真实网卡绑\n定。'}
          </Info>
        </Sidebar>
        <Workspace>
          <Sheet>
            <AddressTag>192.168.0.100/24</AddressTag>
            <Node>
              <AcIcon />
              AC1
            </Node>
          </Sheet>
          <Scroll vertical>
            <ScrollArrow turn={0} />
            <Thumb vertical />
            <Space />
            <ScrollArrow turn={180} />
          </Scroll>
          <Scroll>
            <ScrollArrow turn={270} />
            <Thumb />
            <Space />
            <ScrollArrow turn={90} />
          </Scroll>
          <Scroll />
          <CloudDialog />
        </Workspace>
      </Body>
      <StatusBar>
        <span>总数：3  选中：0</span>
        <a href="#help">获取帮助与反馈</a>
      </StatusBar>
    </Frame>
  );
};

export default App;
